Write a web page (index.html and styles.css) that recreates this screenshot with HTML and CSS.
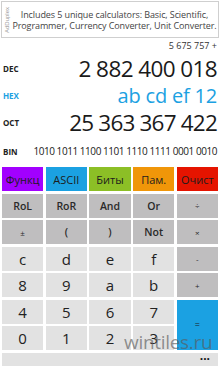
FILE: index.html
```html
<!DOCTYPE html>
<html>
<head>
<meta charset="utf-8">
<link rel="stylesheet" href="styles.css">
</head>
<body>
<div class="ad">
  <div class="ad-brand"><span>AdDuplex</span></div>
  <div class="ad-text">Includes 5 unique calculators: Basic, Scientific,<br>Programmer, Currency Converter, Unit Converter.</div>
</div>
<div class="display">
  <div class="counter">5 675 757 +</div>
  <div class="row dec"><span class="label">DEC</span><span class="num">2 882 400 018</span></div>
  <div class="row hex"><span class="label">HEX</span><span class="num">ab cd ef 12</span></div>
  <div class="row oct"><span class="label">OCT</span><span class="num">25 363 367 422</span></div>
  <div class="row bin"><span class="label">BIN</span><span class="num">1010 1011 1100 1101 1110 1111 0001 0010</span></div>
</div>
<div class="keys">
  <div class="key c-purple">Функц</div>
  <div class="key c-blue">ASCII</div>
  <div class="key c-green">Биты</div>
  <div class="key c-orange">Пам.</div>
  <div class="key c-red">Очист</div>

  <div class="key fn">RoL</div>
  <div class="key fn">RoR</div>
  <div class="key fn">And</div>
  <div class="key fn">Or</div>
  <div class="key fn op">÷</div>

  <div class="key fn op">±</div>
  <div class="key fn">(</div>
  <div class="key fn">)</div>
  <div class="key fn">Not</div>
  <div class="key fn op">×</div>

  <div class="key dg">c</div>
  <div class="key dg">d</div>
  <div class="key dg">e</div>
  <div class="key dg">f</div>
  <div class="key fn op">-</div>

  <div class="key dg">8</div>
  <div class="key dg">9</div>
  <div class="key dg">a</div>
  <div class="key dg">b</div>
  <div class="key fn op">+</div>

  <div class="key dg">4</div>
  <div class="key dg">5</div>
  <div class="key dg">6</div>
  <div class="key dg">7</div>
  <div class="key eq">=</div>

  <div class="key dg">0</div>
  <div class="key dg">1</div>
  <div class="key dg">2</div>
  <div class="key dg">3</div>
</div>
<div class="appbar">···</div>
<div class="watermark">wintiles.ru</div>
</body>
</html>
```
FILE: styles.css
```css
html, body {
  margin: 0;
  padding: 0;
  background: #ffffff;
}
body {
  width: 220px;
  height: 366px;
  overflow: hidden;
  position: relative;
  font-family: "Open Sans", "Noto Sans", sans-serif;
  color: #1f1f1f;
}
.ad {
  margin: 1px 1px 0 1px;
  height: 35px;
  border: 1px solid #cfcfcf;
  display: flex;
  align-items: center;
}
.ad-brand {
  width: 9px;
  height: 35px;
  display: flex;
  align-items: center;
  justify-content: center;
}
.ad-brand span {
  display: block;
  transform: rotate(-90deg);
  font-size: 6px;
  color: #9a9a9a;
  white-space: nowrap;
  font-family: "Liberation Sans", sans-serif;
}
.ad-text {
  flex: 1;
  text-align: center;
  font-size: 9px;
  line-height: 11px;
  color: #444444;
  letter-spacing: -0.1px;
}
.display {
  padding: 0 3px 0 3px;
}
.counter {
  height: 14px;
  line-height: 14px;
  text-align: right;
  font-size: 9px;
  color: #333;
  margin-top: 1px;
}
.row {
  display: flex;
  align-items: center;
  justify-content: space-between;
}
.label {
  font-size: 8px;
  font-weight: 700;
  color: #222;
}
.num {
  white-space: nowrap;
  color: #1a1a1a;
}
.dec { height: 30px; }
.hex { height: 24px; }
.oct { height: 30px; }
.bin { height: 28px; }
.dec .num {
  font-size: 22.5px;
  letter-spacing: -0.6px;
}
.oct .num {
  font-size: 22.5px;
  letter-spacing: -0.8px;
}
.hex .num {
  font-size: 20px;
  letter-spacing: -0.2px;
  color: #1ba1e2;
}
.hex .label { color: #1ba1e2; }
.bin .num {
  font-size: 10px;
  letter-spacing: -0.45px;
}
.keys {
  margin-top: 2px;
  padding: 0 2px;
  display: grid;
  grid-template-columns: repeat(5, 1fr);
  grid-auto-rows: 24px;
  gap: 2.5px;
}
.key {
  display: flex;
  align-items: center;
  justify-content: center;
  font-size: 10.5px;
  font-weight: 600;
  color: #1c1c1c;
}
.c-purple { background: #a200ff; font-weight: 400; font-size: 11px; }
.c-blue { background: #1ba1e2; font-weight: 400; font-size: 11px; }
.c-green { background: #8cbf26; font-weight: 400; font-size: 11px; }
.c-orange { background: #f09609; font-weight: 400; font-size: 11px; }
.c-red { background: #e51400; font-weight: 400; font-size: 11px; }
.fn { background: #bfbebf; color: #2a2a2a; }
.op { font-size: 8px; font-weight: 400; }
.dg {
  background: #e2e2e2;
  font-size: 15px;
  font-weight: 400;
  color: #222;
}
.eq {
  grid-row: span 2;
  background: #1ba1e2;
  font-size: 9px;
  font-weight: 400;
}
.appbar {
  margin: 2.5px 2px 0 2px;
  height: 14px;
  background: #e2e2e2;
  text-align: right;
  padding-right: 8px;
  font-size: 12px;
  line-height: 11px;
  font-weight: 700;
  color: #111;
}
.watermark {
  position: absolute;
  left: 124px;
  top: 329px;
  font-size: 19px;
  color: rgba(90, 90, 90, 0.65);
  letter-spacing: -0.3px;
}
```
